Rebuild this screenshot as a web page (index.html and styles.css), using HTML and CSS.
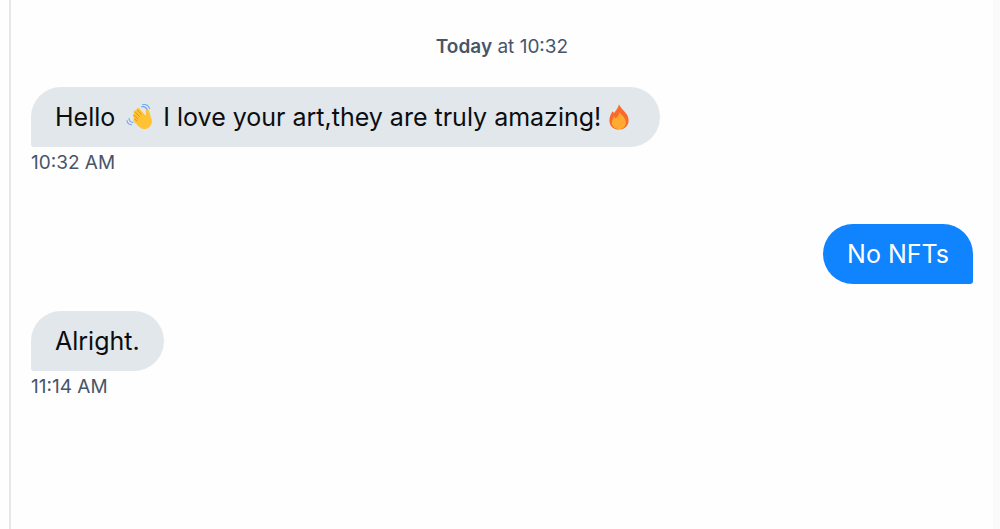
FILE: index.html
```html
<!DOCTYPE html>
<html lang="en">
<head>
  <meta charset="UTF-8" />
  <meta name="viewport" content="width=device-width, initial-scale=1.0"/>
  <title>Messages</title>
  <link rel="stylesheet" href="styles.css">
</head>
<body>
  <main class="chat">
    <p class="day"><strong>Today</strong> at 10:32</p>

    <div class="message received">
      <p class="bubble">
        <span>Hello</span>
        <svg class="emoji wave" viewBox="0 0 28 28" role="img" aria-label="Waving hand">
          <g fill="none" stroke="#6ea6ee" stroke-width="1.1" stroke-linecap="round">
            <path d="M15.500 3.800Q19.500 2.800 21.300 7"/>
            <path d="M16.500 1.700Q22 0.800 23.500 5.500"/>
            <path d="M3 15.500Q3.500 19 7 19.500"/>
            <path d="M1 17.500Q1.500 21.500 5.500 21.800"/>
          </g>
          <path fill="#ffc233" d="M7.300 13.700C6.300 12.400 7 11.500 8 11.200L7.800 9.600C7.300 8 9 6.800 10.300 7.600L10.600 6C11.500 4.600 13.200 5 14 6.200L18.900 12C19.700 12 20.200 11.500 20 10.500L19.700 8.600C19.600 6.300 22.600 6 23.100 8.200L24.800 14C26.600 18 26.300 22 22.900 24.400C19.600 27 16 26.400 13.100 23.800L8 18.800C6.800 17.400 7.300 15.900 8.400 15.700Z"/>
          <path fill="none" stroke="#e48c15" stroke-width="0.900" stroke-linecap="round" d="M8.600 15.800L11 18M8 12.200L12 16M9.500 9.300L13.500 13.700M11.500 7L15.200 11.500"/>
        </svg>
        <span>I love your art,they are truly amazing!</span>
        <svg class="emoji fire" viewBox="0 0 20 26" role="img" aria-label="Fire">
          <path fill="#fa6a2c" d="M10 0.300C10.800 2.800 13 4.600 14.800 6.800C18 10 19.800 13 19.600 17C19.300 22.300 15.200 25.500 10 25.500C4.500 25.500 0.600 22.100 0.400 16.700C0.300 13 1.900 10 3.400 7.400C4.200 7.800 4.700 8.200 5.100 8.900C7.500 6.200 9.300 3.400 10 0.300Z"/>
          <path fill="#ffab30" d="M10.500 8C11.300 10.500 16.700 13 16.800 17.900C16.900 22.400 14 25 10 25C6 25 2.800 22.400 2.800 18.700C2.800 16.300 4.200 14.500 5 12.600C6 13.300 6.300 14 6.500 14.700C8.800 12.600 10.300 10.600 10.500 8Z"/>
        </svg>
      </p>
      <time class="time">10:32 AM</time>
    </div>

    <div class="message sent">
      <p class="bubble">No NFTs</p>
    </div>

    <div class="message received">
      <p class="bubble">Alright.</p>
      <time class="time">11:14 AM</time>
    </div>
  </main>
</body>
</html>
```

FILE: styles.css
```css
* {
  box-sizing: border-box;
}

body {
  margin: 0;
  padding: 0 7px 0 9px;
  background: linear-gradient(to right, #fefefe 50%, #fafafa 50%);
  font-family: Inter, sans-serif;
}

.chat {
  display: flex;
  flex-direction: column;
  min-height: 100vh;
  padding: 33px 20px;
  background: #fefefe;
  border-left: 2px solid #e6e7e9;
}

.day {
  margin: 0 0 26px;
  font-size: 19px;
  line-height: 28px;
  text-align: center;
  color: #475569;
}

.day strong {
  font-weight: 600;
}

.message {
  display: flex;
  flex-direction: column;
}

.received {
  align-items: flex-start;
}

.sent {
  align-items: flex-end;
  margin: 45px 0 27px;
}

.bubble {
  display: flex;
  align-items: center;
  min-height: 60px;
  margin: 0;
  padding: 10px 24px;
  border-radius: 30px;
  font-size: 25px;
  line-height: 40px;
}

.received .bubble {
  background: #e2e7eb;
  border-bottom-left-radius: 3px;
  color: #0b0d10;
}

.sent .bubble {
  background: #1083fe;
  border-bottom-right-radius: 3px;
  color: #fff;
}

.emoji {
  flex: none;
}

.wave {
  width: 28px;
  height: 28px;
  margin: 0 9px 0 11px;
}

.fire {
  width: 20px;
  height: 26px;
  margin: 0 7px 0 8px;
}

.time {
  font-size: 19px;
  line-height: 32px;
  color: #475569;
}
```
